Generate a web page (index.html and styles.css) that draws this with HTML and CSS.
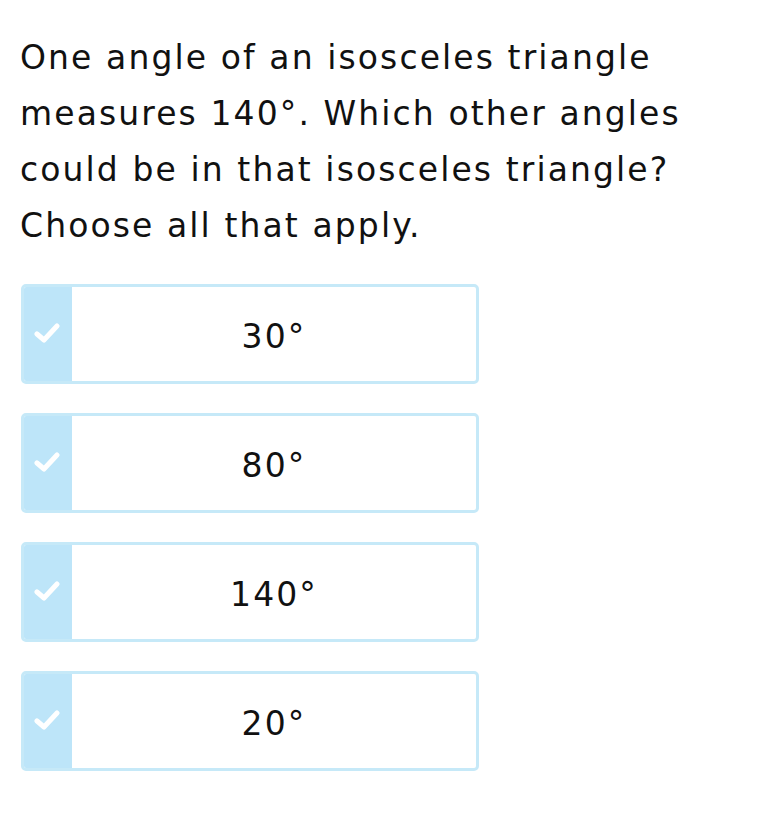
FILE: index.html
```html
<!DOCTYPE html>
<html>
<head>
<meta charset="utf-8">
<link rel="stylesheet" href="styles.css">
</head>
<body>
<div class="page">
  <p class="question">One angle of an isosceles triangle measures 140°. Which other angles could be in that isosceles triangle? Choose all that apply.</p>
  <div class="options">
    <div class="option"><div class="check"><svg width="26" height="22" viewBox="0 0 26 22"><path d="M3 12 L10 18 L23 4" fill="none" stroke="#fff" stroke-width="5" stroke-linecap="round" stroke-linejoin="round"/></svg></div><div class="label">30°</div></div>
    <div class="option"><div class="check"><svg width="26" height="22" viewBox="0 0 26 22"><path d="M3 12 L10 18 L23 4" fill="none" stroke="#fff" stroke-width="5" stroke-linecap="round" stroke-linejoin="round"/></svg></div><div class="label">80°</div></div>
    <div class="option"><div class="check"><svg width="26" height="22" viewBox="0 0 26 22"><path d="M3 12 L10 18 L23 4" fill="none" stroke="#fff" stroke-width="5" stroke-linecap="round" stroke-linejoin="round"/></svg></div><div class="label">140°</div></div>
    <div class="option"><div class="check"><svg width="26" height="22" viewBox="0 0 26 22"><path d="M3 12 L10 18 L23 4" fill="none" stroke="#fff" stroke-width="5" stroke-linecap="round" stroke-linejoin="round"/></svg></div><div class="label">20°</div></div>
  </div>
</div>
</body>
</html>
```
FILE: styles.css
```css
html, body { margin: 0; padding: 0; background: #fff; }
.page {
  padding: 30px 20px 0 20px;
  font-family: "DejaVu Sans", Verdana, sans-serif;
  color: #111;
}
.question {
  margin: 0;
  font-size: 33px;
  line-height: 56px;
  letter-spacing: 2.1px;
  width: 700px;
}
.options {
  margin-top: 30px;
  display: flex;
  flex-direction: column;
  gap: 29px;
  width: 458px;
  margin-left: 1px;
}
.option {
  display: flex;
  height: 100px;
  box-sizing: border-box;
  border: 3px solid #c6e9f8;
  border-radius: 5px;
  overflow: hidden;
}
.check {
  width: 48px;
  background: #bde5f9;
  display: flex;
  align-items: center;
  justify-content: center;
}
.check svg { margin-top: -2px; margin-left: -2px; }
.label {
  flex: 1;
  display: flex;
  align-items: center;
  justify-content: center;
  font-size: 33px;
  letter-spacing: 2.1px;
  padding-top: 4px;
}
```
